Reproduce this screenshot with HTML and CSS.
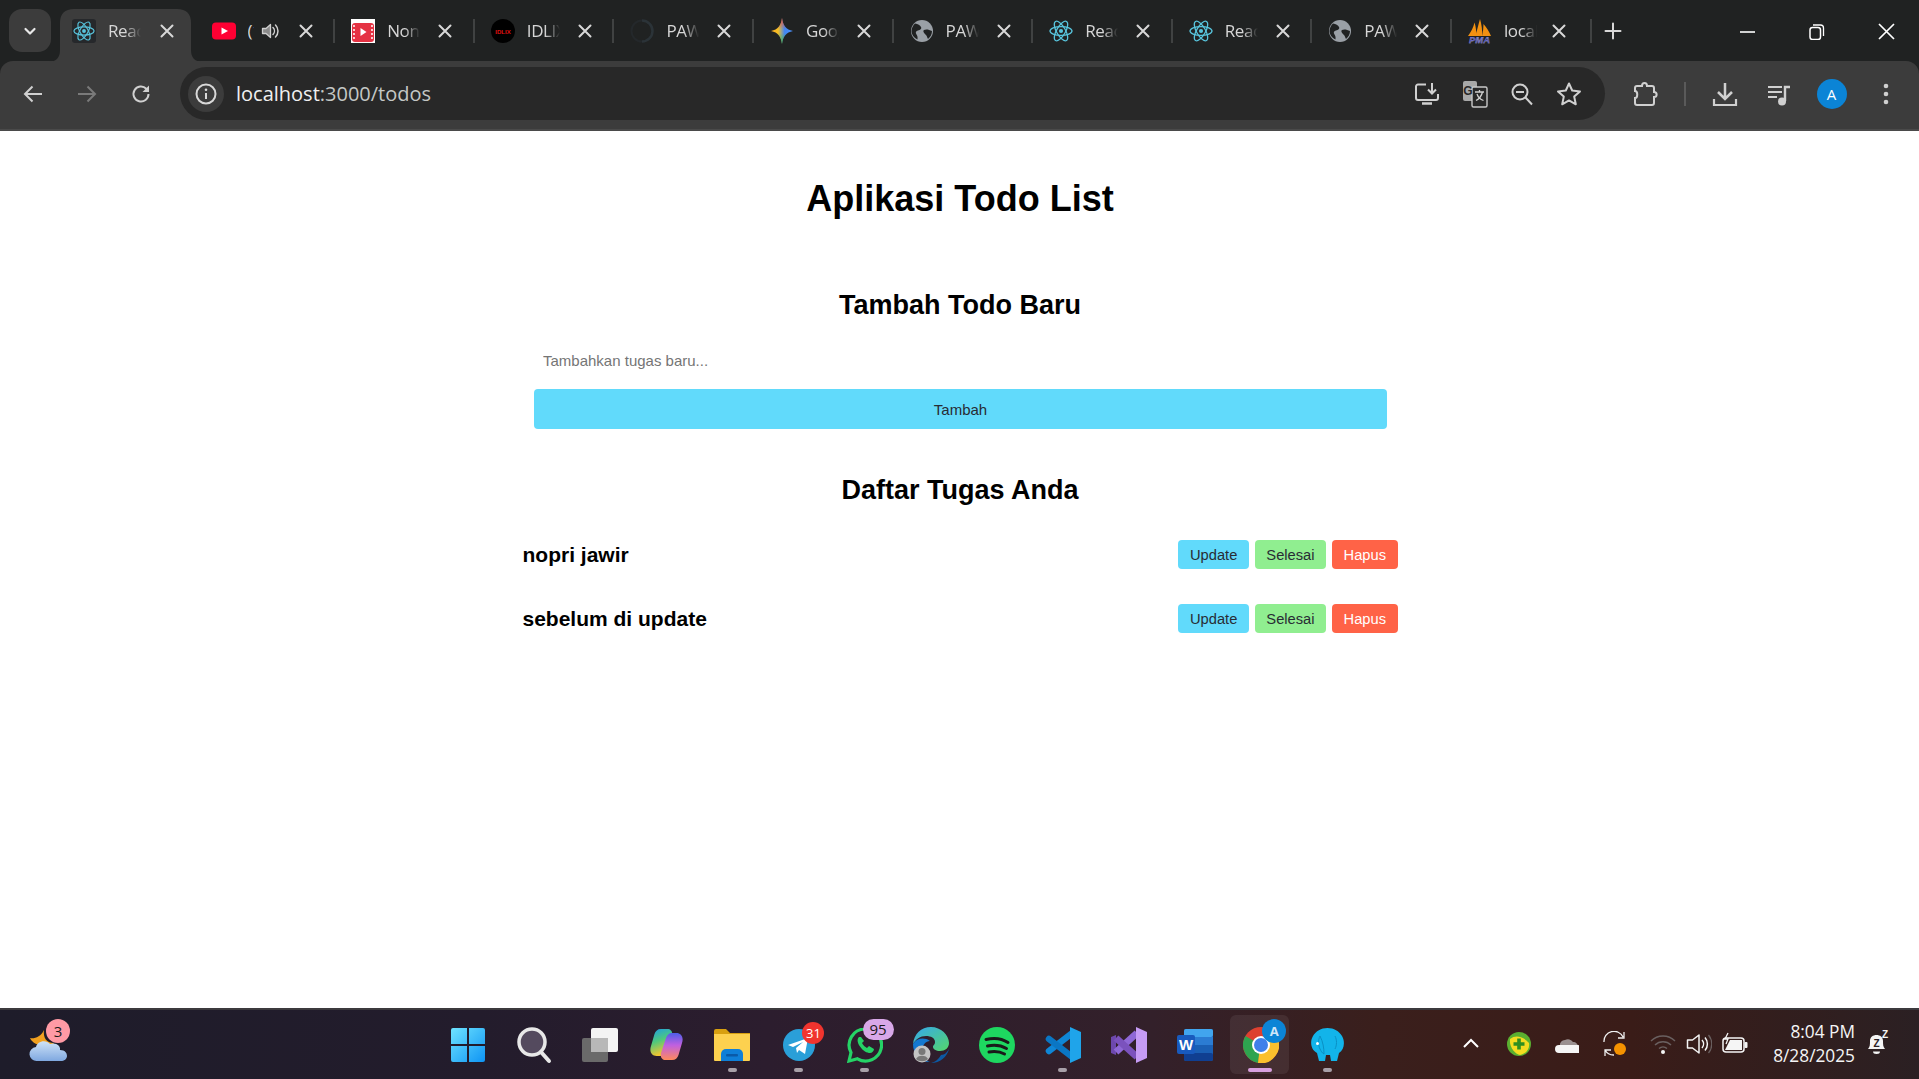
FILE: index.html
```html
<!DOCTYPE html>
<html lang="id">
<head>
<meta charset="utf-8">
<title>Aplikasi Todo List</title>
<link rel="stylesheet" href="styles.css">
</head>
<body>
<svg class="defs" aria-hidden="true">
  <defs>
    <symbol id="react" viewBox="0 0 24 24">
      <g fill="none" stroke="#58c4dc" stroke-width="1.3">
        <ellipse cx="12" cy="12" rx="11" ry="4.4"/>
        <ellipse cx="12" cy="12" rx="11" ry="4.4" transform="rotate(60 12 12)"/>
        <ellipse cx="12" cy="12" rx="11" ry="4.4" transform="rotate(120 12 12)"/>
      </g>
      <circle cx="12" cy="12" r="2.1" fill="#58c4dc"/>
    </symbol>
    <symbol id="globe" viewBox="0 0 24 24">
      <circle cx="12" cy="12" r="11" fill="#9aa0a6"/>
      <path d="M5 4.500c3 .5 5 1.500 6 3.500s-1 3-3 3.500-3 2-1.500 4 1 3.500 1 5C4 19 1.500 15.500 1.500 12 1.500 9 3 6.500 5 4.500zM14 11c2-1 5-.5 8 1 0 3-1.500 6-4 8-1-2-1-3-2.500-4.500S12.500 12 14 11z" fill="#202222"/>
    </symbol>
    <symbol id="x" viewBox="0 0 16 16">
      <path d="M2.500 2.500l11 11M13.500 2.500l-11 11" fill="none" stroke="#d8d8d8" stroke-width="2" stroke-linecap="round"/>
    </symbol>
    <linearGradient id="winGrad" x1="0" y1="0" x2="1" y2="1">
      <stop offset="0" stop-color="#6fe4ff"/><stop offset="1" stop-color="#0e94f4"/>
    </linearGradient>
    <linearGradient id="geminiH" x1="0" y1="0" x2="1" y2="0">
      <stop offset="0" stop-color="#f6a623"/><stop offset=".32" stop-color="#f6c023"/><stop offset=".62" stop-color="#4285f4"/><stop offset="1" stop-color="#4a90f8"/>
    </linearGradient>
    <linearGradient id="geminiV" x1="0" y1="0" x2="0" y2="1">
      <stop offset="0" stop-color="#ee4a3c"/><stop offset=".42" stop-color="#ee4a3c" stop-opacity="0"/><stop offset=".58" stop-color="#2fb457" stop-opacity="0"/><stop offset="1" stop-color="#2fb457"/>
    </linearGradient>
    <linearGradient id="copL" x1="0" y1="0" x2=".3" y2="1">
      <stop offset="0" stop-color="#1d9ce8"/><stop offset=".5" stop-color="#4fc97c"/><stop offset="1" stop-color="#f4c52e"/>
    </linearGradient>
    <linearGradient id="copR" x1="0" y1="0" x2="0" y2="1">
      <stop offset="0" stop-color="#4d5ee8"/><stop offset=".45" stop-color="#c060e0"/><stop offset="1" stop-color="#ff8a5c"/>
    </linearGradient>
    <linearGradient id="edgeGrad" x1="0" y1="0" x2="1" y2="1">
      <stop offset="0" stop-color="#35a8ee"/><stop offset="1" stop-color="#54d66a"/>
    </linearGradient>
    <linearGradient id="cloudGrad" x1="0" y1="0" x2="0" y2="1">
      <stop offset="0" stop-color="#cfe3f8"/><stop offset="1" stop-color="#7fa8e0"/>
    </linearGradient>
  </defs>
</svg>

<div class="app">
  <header class="chrome">
    <div class="strip">
      <button class="tab-menu" type="button">
        <svg width="14" height="14" viewBox="0 0 14 14"><path d="M2.500 5l4.500 4.500L11.500 5" fill="none" stroke="#e8e8e8" stroke-width="2.200" stroke-linecap="round" stroke-linejoin="round"/></svg>
      </button>
      <div class="tabs">
        <div class="tab active">
          <svg class="tab-bg" width="155" height="53" viewBox="0 0 155 53"><path d="M0 53Q12 53 12 41V14Q12 0 26 0H129Q143 0 143 14V41Q143 53 155 53Z" fill="#3c3c3c"/></svg>
          <span class="fav tile"><svg width="22" height="22"><use href="#react"/></svg></span>
          <span class="tab-title">React App</span>
          <svg class="tab-x" width="16" height="16"><use href="#x"/></svg>
        </div>
        <div class="tab">
          <span class="fav"><svg width="24" height="24" viewBox="0 0 24 24"><rect y="3.500" width="24" height="17" rx="4" fill="#ff0033"/><path d="M9.500 8.500l6.500 3.500-6.500 3.500z" fill="#fff"/></svg></span>
          <span class="tab-title tight">(1) YouTube</span>
          <svg class="tab-sound" width="20" height="20" viewBox="0 0 20 20"><path d="M2.500 7.500h3.500l4.500-4v13l-4.500-4H2.500z" fill="#8a8a8a" stroke="#d0d0d0" stroke-width="1.300" stroke-linejoin="round"/><path d="M13 6.500a5 5 0 0 1 0 7M15.500 4a8.500 8.500 0 0 1 0 12" fill="none" stroke="#d0d0d0" stroke-width="1.500" stroke-linecap="round"/></svg>
          <svg class="tab-x" width="16" height="16"><use href="#x"/></svg>
        </div>
        <div class="tab">
          <span class="fav"><svg width="24" height="24" viewBox="0 0 24 24"><rect width="24" height="24" fill="#fff"/><rect x="1" y="4" width="22" height="19" rx="3" fill="#e53243"/><path d="M3 6v16M21 6v16" stroke="#fff" stroke-width="1.500" stroke-dasharray="2 2"/><path d="M9.500 9l6 4-6 4z" fill="#fff"/></svg></span>
          <span class="tab-title">Nonton Film</span>
          <svg class="tab-x" width="16" height="16"><use href="#x"/></svg>
        </div>
        <div class="tab">
          <span class="fav"><svg width="24" height="24" viewBox="0 0 24 24"><circle cx="12" cy="12" r="12" fill="#000"/><text class="idlix" x="12" y="14.500" text-anchor="middle">IDLIX</text></svg></span>
          <span class="tab-title">IDLIX</span>
          <svg class="tab-x" width="16" height="16"><use href="#x"/></svg>
        </div>
        <div class="tab">
          <span class="fav"><svg width="24" height="24" viewBox="0 0 24 24"><path d="M12 1.500a10.500 10.500 0 0 1 0 21" fill="none" stroke="#2b3338" stroke-width="2.500"/><path d="M12 1.500a10.500 10.500 0 0 0 0 21" fill="none" stroke="#24282b" stroke-width="2"/></svg></span>
          <span class="tab-title">PAW</span>
          <svg class="tab-x" width="16" height="16"><use href="#x"/></svg>
        </div>
        <div class="tab">
          <span class="fav"><svg width="24" height="26" viewBox="0 0 24 26"><path d="M12 0C13 7.500 16 11.500 23 13 16 14.500 13 18.500 12 26 11 18.500 8 14.500 1 13 8 11.500 11 7.500 12 0z" fill="url(#geminiH)"/><path d="M12 0C13 7.500 16 11.500 23 13 16 14.500 13 18.500 12 26 11 18.500 8 14.500 1 13 8 11.500 11 7.500 12 0z" fill="url(#geminiV)"/></svg></span>
          <span class="tab-title">Google Gemini</span>
          <svg class="tab-x" width="16" height="16"><use href="#x"/></svg>
        </div>
        <div class="tab">
          <span class="fav"><svg width="24" height="24"><use href="#globe"/></svg></span>
          <span class="tab-title">PAW</span>
          <svg class="tab-x" width="16" height="16"><use href="#x"/></svg>
        </div>
        <div class="tab">
          <span class="fav"><svg width="24" height="24"><use href="#react"/></svg></span>
          <span class="tab-title">React App</span>
          <svg class="tab-x" width="16" height="16"><use href="#x"/></svg>
        </div>
        <div class="tab">
          <span class="fav"><svg width="24" height="24"><use href="#react"/></svg></span>
          <span class="tab-title">React App</span>
          <svg class="tab-x" width="16" height="16"><use href="#x"/></svg>
        </div>
        <div class="tab">
          <span class="fav"><svg width="24" height="24"><use href="#globe"/></svg></span>
          <span class="tab-title">PAW</span>
          <svg class="tab-x" width="16" height="16"><use href="#x"/></svg>
        </div>
        <div class="tab">
          <span class="fav"><svg width="24" height="25" viewBox="0 0 24 25"><path d="M0 17C3 13 5.500 8 6.500 3.500 8 8 8.500 13 8 17zM7.500 17C9 11 10.500 5 12 0c1.500 5 2.500 11 2 17zM14 17c1-4 1.500-8 1.500-12 3 3.500 6 8 7.500 12z" fill="#f29111"/><text class="pma" x="11.500" y="24" text-anchor="middle">PMA</text></svg></span>
          <span class="tab-title">localhost</span>
          <svg class="tab-x" width="16" height="16"><use href="#x"/></svg>
        </div>
      </div>
      <svg class="new-tab" width="18" height="18" viewBox="0 0 18 18"><path d="M9 1.500v15M1.500 9h15" stroke="#d8d8d8" stroke-width="2" stroke-linecap="round"/></svg>
      <div class="win-controls">
        <svg width="16" height="16" viewBox="0 0 16 16"><path d="M0 8h15" stroke="#fff" stroke-width="1.600"/></svg>
        <svg width="16" height="16" viewBox="0 0 16 16"><rect x="1" y="3.500" width="10.500" height="12" rx="2.500" fill="none" stroke="#fff" stroke-width="1.500"/><path d="M4 1h7.500a3 3 0 0 1 3 3v8" fill="none" stroke="#fff" stroke-width="1.300"/></svg>
        <svg width="17" height="17" viewBox="0 0 17 17"><path d="M1 1l15 15M16 1L1 16" stroke="#fff" stroke-width="1.700"/></svg>
      </div>
    </div>
    <div class="toolbar">
      <div class="nav">
        <svg width="22" height="22" viewBox="0 0 22 22"><path d="M20 11H3M10.500 3.500L3 11l7.500 7.500" fill="none" stroke="#d0d0d0" stroke-width="2"/></svg>
        <svg width="22" height="22" viewBox="0 0 22 22"><path d="M2 11h17M11.500 3.500L19 11l-7.500 7.500" fill="none" stroke="#7a7a7a" stroke-width="2"/></svg>
        <svg width="22" height="22" viewBox="0 0 22 22"><path d="M18.500 11a7.500 7.500 0 1 1-2.200-5.300L18.500 8" fill="none" stroke="#d0d0d0" stroke-width="2"/><path d="M19 2.500V9h-6.500z" fill="#d0d0d0"/></svg>
      </div>
      <div class="omnibox">
        <span class="site-info">
          <svg width="24" height="24" viewBox="0 0 24 24"><circle cx="12" cy="12" r="9.500" fill="none" stroke="#d8d8d8" stroke-width="2"/><path d="M12 11v6" stroke="#d8d8d8" stroke-width="2"/><circle cx="12" cy="7.800" r="1.300" fill="#d8d8d8"/></svg>
        </span>
        <span class="url"><span class="url-host">localhost</span>:3000/todos</span>
        <div class="omni-actions">
          <svg width="26" height="26" viewBox="0 0 26 26"><path d="M12 3.500H4a2 2 0 0 0-2 2V17a2 2 0 0 0 2 2h18a2 2 0 0 0 2-2v-4" fill="none" stroke="#d0d0d0" stroke-width="2"/><path d="M8 22.500h10" stroke="#d0d0d0" stroke-width="2.500"/><path d="M18 2v10M14 8.500l4 4 4-4" fill="none" stroke="#d0d0d0" stroke-width="2"/></svg>
          <svg width="26" height="28" viewBox="0 0 26 28"><rect x="1" y="1" width="14" height="20" rx="2" fill="#a8a8a8"/><rect x="10" y="7" width="15" height="20" rx="1.500" fill="#282828" stroke="#c8c8c8" stroke-width="1.400"/><text class="gt-g" x="6" y="15" text-anchor="middle">G</text><path d="M13 12h9M17.500 10v2M20.500 12c-1 4-3.500 7-6.500 8.500M15 14c1 3 3.500 5.500 6.500 6.500" fill="none" stroke="#d0d0d0" stroke-width="1.300"/></svg>
          <svg width="24" height="24" viewBox="0 0 24 24"><circle cx="10" cy="10" r="7.500" fill="none" stroke="#d0d0d0" stroke-width="2"/><path d="M6 10h8M15.500 15.500L22 22.500" stroke="#d0d0d0" stroke-width="2"/></svg>
          <svg class="star" width="26" height="26" viewBox="0 0 26 26"><path d="M13 2.500l3.200 7 7.800.9-5.800 5.200 1.600 7.700L13 19.400l-6.800 3.900 1.600-7.700L2 10.400l7.800-.9z" fill="none" stroke="#d0d0d0" stroke-width="2" stroke-linejoin="round"/></svg>
        </div>
      </div>
      <div class="tool-actions">
        <svg class="ta-ext" width="24" height="26" viewBox="0 0 24 26"><path d="M3 5h5c0-4 5-4 5 0h5a2 2 0 0 1 2 2v4c3.500 0 3.500 5 0 5v6a2 2 0 0 1-2 2H3a2 2 0 0 1-2-2v-5c3 0 3-7 0-7V7a2 2 0 0 1 2-2z" fill="none" stroke="#d0d0d0" stroke-width="2"/></svg>
        <span class="ta-sep"></span>
        <svg class="ta-dl" width="26" height="26" viewBox="0 0 26 26"><path d="M13 2v15M6 11l7 7 7-7" fill="none" stroke="#d0d0d0" stroke-width="2.500"/><path d="M2 18v6h22v-6" fill="none" stroke="#d0d0d0" stroke-width="2.200"/></svg>
        <svg class="ta-media" width="24" height="24" viewBox="0 0 24 24"><path d="M1 5h14M1 10h14M1 15h9" stroke="#d0d0d0" stroke-width="2"/><path d="M18 19V5h5" fill="none" stroke="#d0d0d0" stroke-width="2.400"/><circle cx="15" cy="19.500" r="4" fill="#d0d0d0"/></svg>
        <span class="avatar">A</span>
        <svg class="ta-dots" width="6" height="24" viewBox="0 0 6 24"><circle cx="3" cy="4" r="2.300" fill="#d0d0d0"/><circle cx="3" cy="12" r="2.300" fill="#d0d0d0"/><circle cx="3" cy="20" r="2.300" fill="#d0d0d0"/></svg>
      </div>
    </div>
  </header>

  <main class="page">
    <div class="container">
      <h1 class="title">Aplikasi Todo List</h1>
      <h2 class="subtitle add-title">Tambah Todo Baru</h2>
      <form class="todo-form">
        <input class="todo-input" type="text" placeholder="Tambahkan tugas baru...">
        <button class="add-btn" type="button">Tambah</button>
      </form>
      <h2 class="subtitle list-title">Daftar Tugas Anda</h2>
      <ul class="todo-list">
        <li class="todo-row">
          <span class="todo-text">nopri jawir</span>
          <div class="todo-actions">
            <button class="btn btn-update" type="button">Update</button>
            <button class="btn btn-done" type="button">Selesai</button>
            <button class="btn btn-delete" type="button">Hapus</button>
          </div>
        </li>
        <li class="todo-row">
          <span class="todo-text">sebelum di update</span>
          <div class="todo-actions">
            <button class="btn btn-update" type="button">Update</button>
            <button class="btn btn-done" type="button">Selesai</button>
            <button class="btn btn-delete" type="button">Hapus</button>
          </div>
        </li>
      </ul>
    </div>
  </main>

  <footer class="taskbar">
    <div class="widget">
      <svg width="40" height="36" viewBox="0 0 40 36"><path d="M16 3c-1 7 2 13 10 13-3 4-9 4-13 3-6-2-10-5-11-8 4 1 11-1 14-8z" fill="#f0a020"/><path d="M9 34a7 7 0 0 1-1-14c1-6 10-8 14-3 6-2 11 2 10 6 5 0 7 3 7 6s-3 5-6 5z" fill="url(#cloudGrad)"/></svg>
      <span class="badge badge-weather">3</span>
    </div>
    <div class="apps">
      <div class="app-icon"><svg width="36" height="36" viewBox="0 0 36 36"><path d="M1 3a2 2 0 0 1 2-2h14v16H1zM19 1h14a2 2 0 0 1 2 2v14H19zM1 19h16v16H3a2 2 0 0 1-2-2zM19 19h16v14a2 2 0 0 1-2 2H19z" fill="url(#winGrad)"/></svg></div>
      <div class="app-icon"><svg width="36" height="38" viewBox="0 0 36 38"><circle cx="16" cy="16" r="13" fill="#544a5e" stroke="#e8e8e8" stroke-width="3.500"/><path d="M25 26l8 9" stroke="#e8e8e8" stroke-width="4" stroke-linecap="round"/></svg></div>
      <div class="app-icon"><svg width="38" height="36" viewBox="0 0 38 36"><rect x="1" y="11" width="26" height="24" rx="2" fill="#6a6a6a"/><rect x="10" y="1" width="27" height="24" rx="2" fill="#f4f4f4"/><rect x="10" y="11" width="17" height="14" fill="#b8b8b8"/></svg></div>
      <div class="app-icon"><svg width="33" height="31" viewBox="0 0 33 31"><path d="M11 0C7.500 0 5.500 2 4.500 5L1 17c-2 6 1 10 5.500 10H11c3 0 5-2 6-5l5-15c1-4-1-7-4.500-7z" fill="url(#copL)"/><path d="M22 31c3.500 0 5.500-2 6.500-5L32 14c2-6-1-10-5.500-10H22c-3 0-5 2-6 5l-5 15c-1 4 1 7 4.500 7z" fill="url(#copR)"/></svg></div>
      <div class="app-icon running"><svg width="36" height="32" viewBox="0 0 36 32"><path d="M0 2a2 2 0 0 1 2-2h10l4 4h20v8H0z" fill="#d8a010"/><path d="M0 5h36v26a1 1 0 0 1-1 1H1a1 1 0 0 1-1-1z" fill="#fdd14f"/><path d="M7 32v-7a5 5 0 0 1 5-5h12a5 5 0 0 1 5 5v7z" fill="#0f7fd8"/><rect x="12" y="25" width="12" height="2.500" rx="1" fill="#0a5aa8"/></svg></div>
      <div class="app-icon running"><svg width="32" height="32" viewBox="0 0 32 32"><circle cx="16" cy="16" r="16" fill="#2a9fd8"/><path d="M5 16l20-7-3 16-6-4-2 3-1-5 7-6-10 5z" fill="#fff"/></svg><span class="badge badge-red">31</span></div>
      <div class="app-icon running"><svg width="36" height="36" viewBox="0 0 36 36"><path d="M18 2a16 16 0 0 0-14 23.500L2 34l8.500-2.200A16 16 0 1 0 18 2z" fill="none" stroke="#25d366" stroke-width="3.200"/><path d="M12 10c-2 2-2 5 1 9.500s7 6.500 10 6.500c2 0 4-2 4-4l-5-3-2 2c-2-1-4-3-5-5l2-2-3-4z" fill="#25d366"/></svg><span class="badge badge-lilac">95</span></div>
      <div class="app-icon"><svg width="36" height="36" viewBox="0 0 36 36"><path d="M0 17C1 7 8 0 18 0c10 0 18 8 18 16 0 5-4 8-9 8-4 0-7-2-7-4 0-2 2-2 2-5 0-4-4-6-9-6-6 0-10 3-13 8z" fill="url(#edgeGrad)"/><path d="M0 17c4-6 11-7 17-3-4 0-8 4-8 10 0 5 3 9 8 11C7 35 0 27 0 17z" fill="#1478d0"/><path d="M36 22c-2 8-9 14-18 14 4-1 8-4 10-8 4 0 6-3 8-6z" fill="#0c59a4"/><circle cx="9" cy="27" r="8.500" fill="#c4c4c4"/><circle cx="9" cy="24.500" r="3.500" fill="#787878"/><path d="M3 32c1.500-4.500 10.500-4.500 12 0-3 3-9 3-12 0z" fill="#787878"/></svg></div>
      <div class="app-icon"><svg width="36" height="36" viewBox="0 0 36 36"><circle cx="18" cy="18" r="18" fill="#1ed760"/><path d="M7 12.500c8-2 16-1 22 3M8.500 19c7-1.500 13-1 19 2.500M10 25c6-1 11-.5 15.500 2" fill="none" stroke="#1a1a1a" stroke-width="3" stroke-linecap="round"/></svg></div>
      <div class="app-icon running"><svg width="37" height="36" viewBox="0 0 37 36"><path d="M27 7L5 24" stroke="#0f86d6" stroke-width="6.500" stroke-linecap="round"/><path d="M5 12l22 17" stroke="#0a76c4" stroke-width="6.500" stroke-linecap="round"/><path d="M26 0l11 5v26l-11 5z" fill="#1fa4ea"/></svg></div>
      <div class="app-icon"><svg width="36" height="36" viewBox="0 0 36 36"><path d="M0 10l5-2v20l-5-2z" fill="#6d48ad"/><path d="M26 6L5 25" stroke="#8f68d6" stroke-width="7"/><path d="M5 11l21 19" stroke="#7b52bd" stroke-width="7"/><path d="M25 0l11 5v26l-11 5z" fill="#c69cf5"/></svg></div>
      <div class="app-icon"><svg width="36" height="32" viewBox="0 0 36 32"><rect x="7" y="0" width="29" height="32" rx="2" fill="#1a5fb4"/><rect x="7" y="0" width="29" height="8" rx="2" fill="#41a5ee"/><rect x="7" y="8" width="29" height="8" fill="#2b7cd3"/><rect x="7" y="24" width="29" height="8" rx="2" fill="#103f91"/><rect x="0" y="6" width="18" height="19" rx="2" fill="#185abd"/><text class="word-w" x="9" y="20.500" text-anchor="middle">W</text></svg></div>
      <div class="app-icon current"><svg width="36" height="36" viewBox="0 0 36 36"><circle cx="18" cy="18" r="18" fill="#dd4030"/><path d="M18 18L2.500 27A18 18 0 0 1 2.400 9zM18 18L2.500 27A18 18 0 0 0 15 36z" fill="#2ea44f"/><path d="M18 10h16a18 18 0 0 1-19 26z" fill="#fbc02d"/><circle cx="18" cy="18" r="9" fill="#fff"/><circle cx="18" cy="18" r="7" fill="#3f80ea"/></svg><span class="badge badge-chrome">A</span></div>
      <div class="app-icon running"><svg width="33" height="33" viewBox="0 0 33 33"><path d="M16.500 0C10 0 5 3 2 8c-3.500 6-2 14 4 17l2 8h6l1-6h4l1 6h6l2-8c5-3 6.500-11 3-17-3-5-8-8-14.500-8z" fill="#12b4ea"/><path d="M9 8c-2 4-2 9 0 13 1 2 2 4 4 5 0-6-1-12-4-18zM24 8c2 4 2 9 0 13" fill="none" stroke="#0a90c4" stroke-width="1"/><circle cx="6.500" cy="15.500" r="1.500" fill="#fff"/></svg></div>
    </div>
    <div class="tray">
      <svg class="t-chev" width="18" height="12" viewBox="0 0 18 12"><path d="M2 10l7-7 7 7" fill="none" stroke="#fff" stroke-width="2"/></svg>
      <svg class="t-360" width="24" height="24" viewBox="0 0 24 24"><circle cx="12" cy="12" r="12" fill="#5ab030"/><path d="M3 7c6-5 14-2 19 4 1 6-3 11-9 12C8 22 2 15 3 7z" fill="#f4dc20"/><path d="M12 6.500v11M6.500 12h11" stroke="#2f8f20" stroke-width="3.600"/></svg>
      <svg class="t-cloud" width="24" height="16" viewBox="0 0 24 16"><path d="M5 9a5 5 0 0 1 5-6 6 6 0 0 1 8 2c3 0 5 2 5 5H5z" fill="#9a9090"/><path d="M4 16a4 4 0 0 1 0-8h19a3 3 0 0 1-1 8z" fill="#f5f5f5"/></svg>
      <svg class="t-sync" width="26" height="26" viewBox="0 0 26 26"><path d="M2 11A10 10 0 0 1 21 6M22 1v6h-6M3 25v-6h6M3 19a10 10 0 0 0 9 5" fill="none" stroke="#f0f0f0" stroke-width="1.300"/><circle cx="18" cy="18" r="6" fill="#f59200"/></svg>
      <svg class="t-wifi" width="26" height="20" viewBox="0 0 26 20"><path d="M1 7a17 17 0 0 1 24 0M5 11a11.500 11.500 0 0 1 16 0M9 14.500a6 6 0 0 1 8 0" fill="none" stroke="#6a6060" stroke-width="1.400"/><circle cx="13" cy="18" r="2" fill="#f5f5f5"/></svg>
      <svg class="t-vol" width="26" height="22" viewBox="0 0 26 22"><path d="M1.500 7h5L13 2v18l-6.500-5h-5z" fill="none" stroke="#f5f5f5" stroke-width="1.500" stroke-linejoin="round"/><path d="M16 7a6 6 0 0 1 0 8" fill="none" stroke="#f5f5f5" stroke-width="1.500"/><path d="M19 4.500a10 10 0 0 1 0 13" fill="none" stroke="#f5f5f5" stroke-width="1.500"/><path d="M22.500 2a14 14 0 0 1 0 18" fill="none" stroke="#6a6060" stroke-width="1.300"/></svg>
      <svg class="t-bat" width="26" height="22" viewBox="0 0 26 22"><rect x="1" y="6" width="21" height="14" rx="3" fill="none" stroke="#f5f5f5" stroke-width="1.500"/><path d="M3 18l5-10h12v10z" fill="#f5f5f5"/><rect x="22.500" y="10" width="3" height="6" rx="1" fill="#f5f5f5"/><path d="M6 1L3 7h3L4 12" fill="none" stroke="#f5f5f5" stroke-width="1.300"/></svg>
      <div class="clock"><span>8:04 PM</span><span>8/28/2025</span></div>
      <svg class="t-bell" width="22" height="26" viewBox="0 0 22 26"><path d="M1 19c2-2 2-5 2-8 0-4 3-6 6.500-6S16 7 16 11c0 3 0 6 2 8z" fill="#f5f5f5"/><path d="M6 21.500a3.500 2.500 0 0 0 7 0z" fill="#f5f5f5"/><text class="bell-z1" x="9.500" y="17" text-anchor="middle">Z</text><text class="bell-z2" x="18" y="8" text-anchor="middle">Z</text></svg>
    </div>
  </footer>
</div>
</body>
</html>
```

FILE: styles.css
```css
* { box-sizing: border-box; }
html, body { margin: 0; padding: 0; height: 100%; background: #fff; overflow: hidden; }
body { font-family: "Liberation Sans", Arial, sans-serif; color: #000; }
.defs { position: absolute; width: 0; height: 0; }
.app { display: flex; flex-direction: column; height: 100vh; }

/* browser chrome */
.chrome { background: #202222; flex: none; }
.strip { height: 61px; display: flex; align-items: flex-start; padding-top: 9px; }
.tab-menu { width: 42px; height: 43px; margin-left: 9px; margin-right: 4px; border: 0; padding: 0; border-radius: 13px; background: #3c3c3c; display: flex; align-items: center; justify-content: center; flex: none; }
.tabs { display: flex; flex: none; }
.tab { width: 139.6px; height: 44px; display: flex; align-items: center; padding-left: 17px; position: relative; flex: none; }
.tab::after { content: ""; position: absolute; right: -1px; top: 10px; height: 24px; width: 2px; background: #404242; }
.tab.active::after { display: none; }
.tab-bg { position: absolute; left: -7px; top: 0; }
.fav { width: 24px; height: 24px; display: flex; align-items: center; justify-content: center; flex: none; position: relative; }
.fav.tile { background: #26282b; border-radius: 3px; }
.tab-title { position: relative; width: 33px; margin-left: 12px; font: 17px/24px "Open Sans", sans-serif; color: #d6d6d6; white-space: nowrap; overflow: hidden; flex: none; -webkit-mask-image: linear-gradient(90deg, #000 55%, transparent); mask-image: linear-gradient(90deg, #000 55%, transparent); letter-spacing: -.4px; }
.tab-title.tight { width: 6px; -webkit-mask-image: none; mask-image: none; }
.tab-sound { position: absolute; left: 65px; top: 12px; }
.tab-x { position: absolute; left: 103px; top: 14px; }
.tab.active .tab-x { left: 104px; }
.tab:last-child .tab-x { left: 100px; }
.new-tab { margin: 13px 0 0 13px; flex: none; }
.win-controls { margin-left: auto; display: flex; align-items: center; gap: 53px; padding: 14px 24px 0 0; }

.toolbar { height: 70px; background: #3c3c3c; border-radius: 13px 13px 0 0; display: flex; align-items: center; padding: 0 0 3px 22px; border-bottom: 2px solid #4a4a4a; }
.nav { display: flex; align-items: center; gap: 32px; flex: none; }
.omnibox { width: 1425px; height: 53px; margin-left: 28px; background: #282828; border-radius: 27px; display: flex; align-items: center; padding: 0 23px 0 8px; flex: none; }
.site-info { width: 36px; height: 36px; border-radius: 50%; background: #3c3c3c; display: flex; align-items: center; justify-content: center; flex: none; }
.url { margin: 1px 0 0 12px; font: 20px/24px "Open Sans", sans-serif; color: #c4c7c5; white-space: nowrap; }
.url-host { color: #f0f0f0; }
.omni-actions { margin-left: auto; display: flex; align-items: center; gap: 22px; }
.tool-actions { display: flex; align-items: center; flex: none; margin-left: 29px; }
.ta-sep { width: 2px; height: 24px; background: #5a5a5a; margin: 0 25.500px 0 26px; }
.ta-media { margin-left: 29px; }
.avatar { width: 30px; height: 30px; border-radius: 50%; background: #0b84d6; color: #fff; font: 15px/30px "Open Sans", sans-serif; text-align: center; margin-left: 26px; }
.ta-dots { margin-left: 36px; }
.idlix { font: bold 6px "Liberation Sans", sans-serif; fill: #e01010; }
.pma { font: italic bold 9.500px "Liberation Sans", sans-serif; fill: #4a4ab0; stroke: #d0d0e8; stroke-width: .25px; }
.gt-g { font: bold 12px "Liberation Sans", sans-serif; fill: #282828; }

/* page */
.page { flex: 1; min-height: 0; background: #fff; }
.container { width: 875px; margin: 0 0 0 522.500px; }
.title { margin: 49px 0 0; font-size: 36px; line-height: 37px; font-weight: 700; text-align: center; }
.subtitle { font-size: 27px; line-height: 28px; font-weight: 700; text-align: center; }
.add-title { margin: 74px 0 0; }
.list-title { margin: 47px 0 0; }
.todo-form { margin: 22px 10.500px 0 11.500px; display: flex; flex-direction: column; gap: 8px; }
.todo-input { height: 40px; border: 0; outline: 0; padding: 0 9px 2px; font: 15px "Liberation Sans", sans-serif; background: #fff; }
.todo-input::placeholder { color: #757575; }
.add-btn { height: 40px; border: 0; border-radius: 4px; background: #61dafb; color: #282c34; font: 15px "Liberation Sans", sans-serif; }
.todo-list { list-style: none; margin: 18px 0 0; padding: 0; }
.todo-row { height: 64.200px; display: flex; align-items: center; justify-content: space-between; }
.todo-text { font-size: 21px; font-weight: 700; padding-top: 2px; }
.todo-actions { display: flex; gap: 6px; }
.btn { height: 29px; border: 0; border-radius: 4px; padding: 1px 11.500px 0; font: 14.700px "Liberation Sans", sans-serif; color: #282c34; }
.btn-update { background: #61dafb; }
.btn-done { background: #90ee90; }
.btn-delete { background: #ff6347; color: #fff; }

/* taskbar */
.taskbar { flex: none; height: 71px; border-top: 2px solid #3c3a3e; background: linear-gradient(90deg, #1e1c2a 0%, #231c2c 25%, #2c1d2e 40%, #33202a 60%, #3a1f1c 72%, #3a1c18 85%, #2b2023 100%); display: flex; align-items: center; position: relative; }
.widget { position: relative; width: 40px; height: 36px; margin: 0 0 0 28px; flex: none; }
.badge { position: absolute; border-radius: 50%; text-align: center; font-family: "Open Sans", sans-serif; }
.badge-weather { left: 18px; top: -8px; width: 24px; height: 24px; background: #ff9aa5; color: #1a1a1a; font-size: 15px; line-height: 24px; }
.apps { display: flex; margin-left: 367px; flex: none; }
.app-icon { width: 66.100px; height: 69px; display: flex; align-items: center; justify-content: center; position: relative; flex: none; }
.app-icon.running::after { content: ""; position: absolute; left: 28.500px; bottom: 7px; width: 9px; height: 4px; border-radius: 2px; background: #a8a0a8; }
.app-icon.current::before { content: ""; position: absolute; left: 2px; width: 59px; top: 5px; bottom: 5px; border-radius: 6px; background: rgba(255,255,255,.07); }
.app-icon.current::after { content: ""; position: absolute; left: 20px; bottom: 7px; width: 24px; height: 4px; border-radius: 2px; background: #d8a0e0; }
.app-icon.current svg { position: relative; }
.badge-red { left: 37px; top: 12px; width: 22px; height: 22px; background: #f0342e; color: #fff; font-size: 13px; line-height: 22px; }
.badge-lilac { left: 31px; top: 9px; width: 31px; height: 21px; border-radius: 11px; background: #d8a8e8; color: #1a1a1a; font-size: 15px; line-height: 21px; }
.badge-chrome { left: 34px; top: 9px; width: 24px; height: 24px; background: #0b84d6; color: #cfe6f8; font-size: 13px; line-height: 24px; font-weight: 700; }
.tray { position: absolute; left: 0; right: 0; top: 0; bottom: 0; pointer-events: none; }
.tray > svg { position: absolute; }
.t-chev { left: 1462px; top: 27px; }
.t-360 { left: 1507px; top: 22px; }
.t-cloud { left: 1555px; top: 27px; }
.t-sync { left: 1602px; top: 21px; }
.t-wifi { left: 1650px; top: 24px; }
.t-vol { left: 1686px; top: 23px; }
.t-bat { left: 1722px; top: 22px; }
.t-bell { left: 1867px; top: 20px; }
.clock { position: absolute; right: 64px; top: 10px; display: flex; flex-direction: column; align-items: flex-end; color: #f5f5f5; font: 17.300px/24px "Open Sans", sans-serif; }
.word-w { font: bold 15px "Liberation Sans", sans-serif; fill: #fff; }
.bell-z1 { font: bold 10px "Liberation Sans", sans-serif; fill: #2a2024; }
.bell-z2 { font: bold 10px "Liberation Sans", sans-serif; fill: #f5f5f5; }
```
